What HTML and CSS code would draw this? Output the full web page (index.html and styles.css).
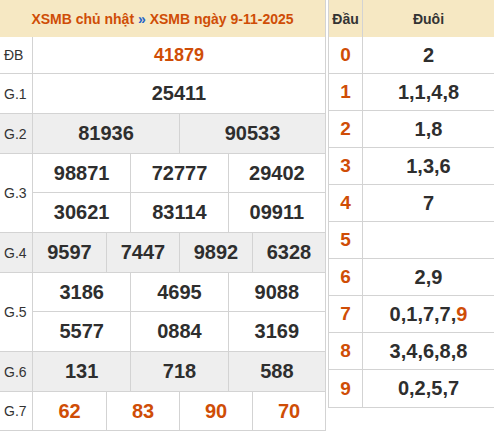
FILE: index.html
```html
<!DOCTYPE html>
<html lang="vi">
<head>
<meta charset="utf-8">
<title>XSMB ngày 9-11-2025</title>
<link rel="stylesheet" href="styles.css">
</head>
<body>
<div class="wrap">
  <div class="kq">
    <div class="kq-head"><span class="ttl">XSMB chủ nhật <span class="sep">»</span> XSMB ngày 9-11-2025</span></div>
    <div class="row r-db">
      <div class="lbl">ĐB</div>
      <div class="vals c1"><span class="num hot">41879</span></div>
    </div>
    <div class="row">
      <div class="lbl">G.1</div>
      <div class="vals c1"><span class="num">25411</span></div>
    </div>
    <div class="row alt">
      <div class="lbl">G.2</div>
      <div class="vals c2"><span class="num">81936</span><span class="num">90533</span></div>
    </div>
    <div class="row">
      <div class="lbl">G.3</div>
      <div class="vals c3 two">
        <span class="num">98871</span><span class="num">72777</span><span class="num">29402</span>
        <span class="num">30621</span><span class="num">83114</span><span class="num">09911</span>
      </div>
    </div>
    <div class="row alt">
      <div class="lbl">G.4</div>
      <div class="vals c4"><span class="num">9597</span><span class="num">7447</span><span class="num">9892</span><span class="num">6328</span></div>
    </div>
    <div class="row">
      <div class="lbl">G.5</div>
      <div class="vals c3 two">
        <span class="num">3186</span><span class="num">4695</span><span class="num">9088</span>
        <span class="num">5577</span><span class="num">0884</span><span class="num">3169</span>
      </div>
    </div>
    <div class="row alt">
      <div class="lbl">G.6</div>
      <div class="vals c3"><span class="num">131</span><span class="num">718</span><span class="num">588</span></div>
    </div>
    <div class="row r-g7">
      <div class="lbl">G.7</div>
      <div class="vals c4"><span class="num hot">62</span><span class="num hot">83</span><span class="num hot">90</span><span class="num hot">70</span></div>
    </div>
  </div>

  <div class="lt">
    <div class="lt-row lt-head"><div class="dau">Đầu</div><div class="duoi">Đuôi</div></div>
    <div class="lt-row"><div class="dau">0</div><div class="duoi">2</div></div>
    <div class="lt-row"><div class="dau">1</div><div class="duoi">1,1,4,8</div></div>
    <div class="lt-row"><div class="dau">2</div><div class="duoi">1,8</div></div>
    <div class="lt-row"><div class="dau">3</div><div class="duoi">1,3,6</div></div>
    <div class="lt-row"><div class="dau">4</div><div class="duoi">7</div></div>
    <div class="lt-row"><div class="dau">5</div><div class="duoi"></div></div>
    <div class="lt-row"><div class="dau">6</div><div class="duoi">2,9</div></div>
    <div class="lt-row"><div class="dau">7</div><div class="duoi"><span>0,1,7,7,<span class="hl">9</span></span></div></div>
    <div class="lt-row"><div class="dau">8</div><div class="duoi">3,4,6,8,8</div></div>
    <div class="lt-row"><div class="dau">9</div><div class="duoi">0,2,5,7</div></div>
  </div>
</div>
</body>
</html>
```

FILE: styles.css
```css
* { box-sizing: border-box; }

html, body {
  margin: 0;
  padding: 0;
  background: #fff;
}

body {
  font-family: "Liberation Sans", Arial, sans-serif;
  color: #333;
}

.wrap {
  display: flex;
  align-items: flex-start;
  gap: 2px;
  width: 494px;
}

/* ---------- results table ---------- */
.kq {
  width: 326px;
  flex: none;
  border-right: 1px solid #d3d3d3;
  border-bottom: 1px solid #d3d3d3;
}

.kq-head {
  height: 37px;
  background: #f6e8c3;
  display: flex;
  align-items: center;
  justify-content: center;
  font-size: 14px;
  font-weight: bold;
  color: #cf4d06;
}

.kq-head .sep {
  color: #2463c9;
}

.row {
  display: grid;
  grid-template-columns: 33px 1fr;
  border-top: 1px solid #d3d3d3;
  min-height: 40px;
}

.kq-head + .row {
  border-top: none;
  min-height: 36px;
}

.row.r-g7 {
  min-height: 39px;
}

.row.alt {
  background: #eeeeee;
}

.lbl {
  border-right: 1px solid #d3d3d3;
  display: flex;
  align-items: center;
  padding-left: 4px;
  font-size: 14px;
  color: #333;
}

.vals {
  display: grid;
}

.vals.c1 { grid-template-columns: 1fr; }
.vals.c2 { grid-template-columns: repeat(2, 1fr); }
.vals.c3 { grid-template-columns: repeat(3, 1fr); }
.vals.c4 { grid-template-columns: repeat(4, 1fr); }

.num {
  display: flex;
  align-items: center;
  justify-content: center;
  font-size: 20px;
  font-weight: bold;
  color: #2e2e2e;
  border-left: 1px solid #d3d3d3;
  min-height: 39px;
}

.r-db .num { min-height: 36px; font-size: 18px; }
.r-g7 .num { min-height: 38px; }

.vals .num:first-child,
.vals.c3 .num:nth-child(3n+1) {
  border-left: none;
}

.vals.two .num:nth-child(-n+3) {
  border-bottom: 1px solid #d3d3d3;
}

.num.hot {
  color: #cf4d06;
}

/* ---------- loto table ---------- */
.lt {
  width: 166px;
  flex: none;
  border-left: 1px solid #d3d3d3;
  border-bottom: 1px solid #d3d3d3;
}

.lt-row {
  display: grid;
  grid-template-columns: 34px 1fr;
  height: 37px;
  border-bottom: 1px solid #d3d3d3;
}

.lt-row:last-child {
  border-bottom: none;
}

.lt-row.lt-head {
  border-bottom: none;
  background: #f6e8c3;
}

.dau, .duoi {
  display: flex;
  align-items: center;
  justify-content: center;
  font-weight: bold;
}

.dau {
  border-right: 1px solid #d3d3d3;
  font-size: 19px;
  color: #cf4d06;
}

.duoi {
  font-size: 20px;
  color: #2e2e2e;
}

.lt-head .dau,
.lt-head .duoi {
  font-size: 14px;
  color: #333;
}

.hl {
  color: #cf4d06;
}
```
